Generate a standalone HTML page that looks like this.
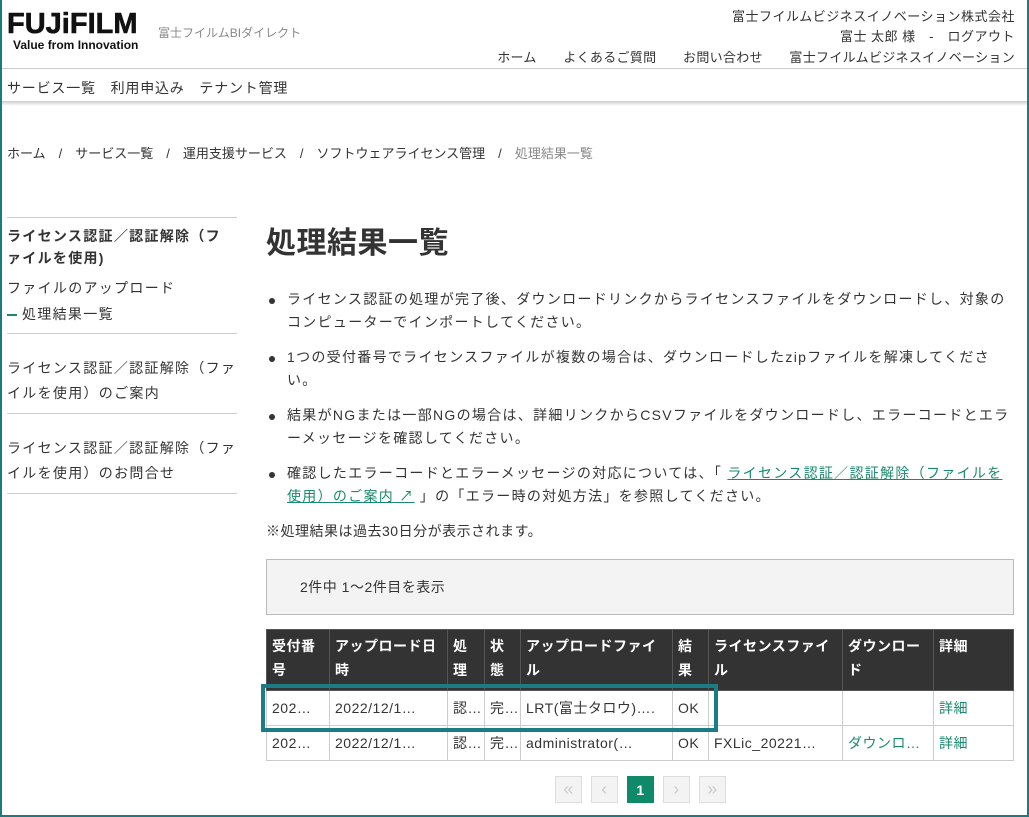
<!DOCTYPE html>
<html><head><meta charset="utf-8"><style>
*{box-sizing:border-box;margin:0;padding:0}
body{width:1029px;height:817px;overflow:hidden;background:#fff;font-family:"Liberation Sans","Noto Sans CJK JP",sans-serif;color:#333;font-size:14px;position:relative;letter-spacing:0.5px}
.frame{position:absolute;inset:0;border:2px solid #1f7a80;border-top:none;pointer-events:none;z-index:10}
.a{position:absolute;white-space:nowrap}
.hdrline{position:absolute;left:0;top:68px;width:1029px;height:1px;background:#ccc}
.navbar{position:absolute;left:0;top:101px;width:1029px;height:5px;background:linear-gradient(#ccc,#fff)}
.side{position:absolute;left:7px;width:230px;border-top:1px solid #ccc;letter-spacing:1.3px}
ul.b{position:absolute;left:266px;top:288px;width:760px;list-style:none;letter-spacing:1.3px}
ul.b li{position:relative;padding-left:21px;line-height:23px;margin-bottom:12px;white-space:nowrap}
ul.b li:before{content:"";position:absolute;left:3px;top:10px;width:6px;height:6px;border-radius:50%;background:#333}
a{color:#1a8a6e}
ul.b a{text-decoration:underline}
table{position:absolute;left:266px;top:629px;border-collapse:collapse;font-size:14px;table-layout:fixed;width:747px}
th{background:#333;color:#fff;text-align:left;vertical-align:top;font-weight:bold;padding:4px 5px;line-height:24px;border:1px solid #555;height:61px;word-break:break-all}
td{border:1px solid #ccc;padding:0 5px;height:35px;white-space:nowrap;overflow:hidden}
.pg{position:absolute;top:776px;width:27px;height:27px;border:1px solid #ddd;background:#f3f3f3;color:#ccc;text-align:center;line-height:25px;font-size:18px}
</style></head><body>
<div class="frame"></div>
<div class="a" style="left:7px;top:8px;font:900 29px 'Liberation Sans',sans-serif;letter-spacing:0px;color:#111;-webkit-text-stroke:0.6px #111">FUJ<span>i</span>FILM</div>
<div class="a" style="left:13px;top:38px;font:bold 12px 'Liberation Sans',sans-serif;color:#111;letter-spacing:0">Value from Innovation</div>
<div class="a" style="left:158px;top:24px;font-size:12px;color:#888;letter-spacing:0">富士フイルムBIダイレクト</div>
<div class="a" style="right:14px;top:6px;font-size:13px">富士フイルムビジネスイノベーション株式会社</div>
<div class="a" style="right:14px;top:26px;font-size:13px">富士 太郎 様　-　ログアウト</div>
<div class="a" style="right:14px;top:47px;font-size:13px;letter-spacing:0.3px">ホーム　　よくあるご質問　　お問い合わせ　　富士フイルムビジネスイノベーション</div>
<div class="hdrline"></div>
<div class="a" style="left:7px;top:78px;font-size:14px;letter-spacing:0.8px">サービス一覧　利用申込み　テナント管理</div>
<div class="navbar"></div>
<div class="a" style="left:7px;top:143px;font-size:13px;letter-spacing:0">ホーム　/　サービス一覧　/　運用支援サービス　/　ソフトウェアライセンス管理　/　<span style="color:#888">処理結果一覧</span></div>
<div class="side" style="top:217px;padding-top:7px;line-height:22px">
<div style="font-weight:bold;white-space:nowrap">ライセンス認証／認証解除（フ<br>ァイルを使用)</div>
<div style="margin-top:6px;line-height:26px">ファイルのアップロード</div>
<div style="line-height:26px"><span style="display:inline-block;width:10px;height:2px;background:#1a8a6e;vertical-align:middle;margin-right:5px"></span>処理結果一覧</div>
</div>
<div class="side" style="top:333px;padding-top:22px;line-height:25px;height:80px">ライセンス認証／認証解除（ファイルを使用）のご案内</div>
<div class="side" style="top:413px;padding-top:22px;line-height:25px;height:81px;border-bottom:1px solid #ccc">ライセンス認証／認証解除（ファイルを使用）のお問合せ</div>
<div class="a" style="left:266px;top:218px;font-size:30px;font-weight:bold;color:#333">処理結果一覧</div>
<ul class="b">
<li>ライセンス認証の処理が完了後、ダウンロードリンクからライセンスファイルをダウンロードし、対象の<br>コンピューターでインポートしてください。</li>
<li>1つの受付番号でライセンスファイルが複数の場合は、ダウンロードしたzipファイルを解凍してくださ<br>い。</li>
<li>結果がNGまたは一部NGの場合は、詳細リンクからCSVファイルをダウンロードし、エラーコードとエラ<br>ーメッセージを確認してください。</li>
<li>確認したエラーコードとエラーメッセージの対応については、「 <a>ライセンス認証／認証解除（ファイルを<br>使用）のご案内 ↗</a> 」の「エラー時の対処方法」を参照してください。</li>
</ul>
<div class="a" style="left:266px;top:521px">※処理結果は過去30日分が表示されます。</div>
<div class="a" style="left:266px;top:559px;width:748px;height:56px;border:1px solid #bbb;background:#f3f3f3;padding:17px 0 0 33px">2件中 1〜2件目を表示</div>
<table>
<colgroup><col style="width:63px"><col style="width:118px"><col style="width:37px"><col style="width:36px"><col style="width:152px"><col style="width:36px"><col style="width:134px"><col style="width:91px"><col style="width:80px"></colgroup>
<tr><th>受付番号</th><th>アップロード日時</th><th>処理</th><th>状態</th><th>アップロードファイル</th><th>結果</th><th>ライセンスファイル</th><th>ダウンロード</th><th>詳細</th></tr>
<tr><td>202…</td><td>2022/12/1…</td><td>認…</td><td>完…</td><td>LRT(富士タロウ)….</td><td>OK</td><td></td><td></td><td><a>詳細</a></td></tr>
<tr><td>202…</td><td>2022/12/1…</td><td>認…</td><td>完…</td><td>administrator(…</td><td>OK</td><td>FXLic_20221…</td><td><a>ダウンロ…</a></td><td><a>詳細</a></td></tr>
</table>
<div class="a" style="left:261px;top:684px;width:457px;height:48px;border:4px solid #1c7c85"></div>
<div class="pg" style="left:555px">«</div>
<div class="pg" style="left:591px">‹</div>
<div class="pg" style="left:627px;background:#0e8a6a;border-color:#0e8a6a;color:#fff;font-size:14px;font-weight:bold;line-height:26px">1</div>
<div class="pg" style="left:663px">›</div>
<div class="pg" style="left:699px">»</div>
</body></html>
